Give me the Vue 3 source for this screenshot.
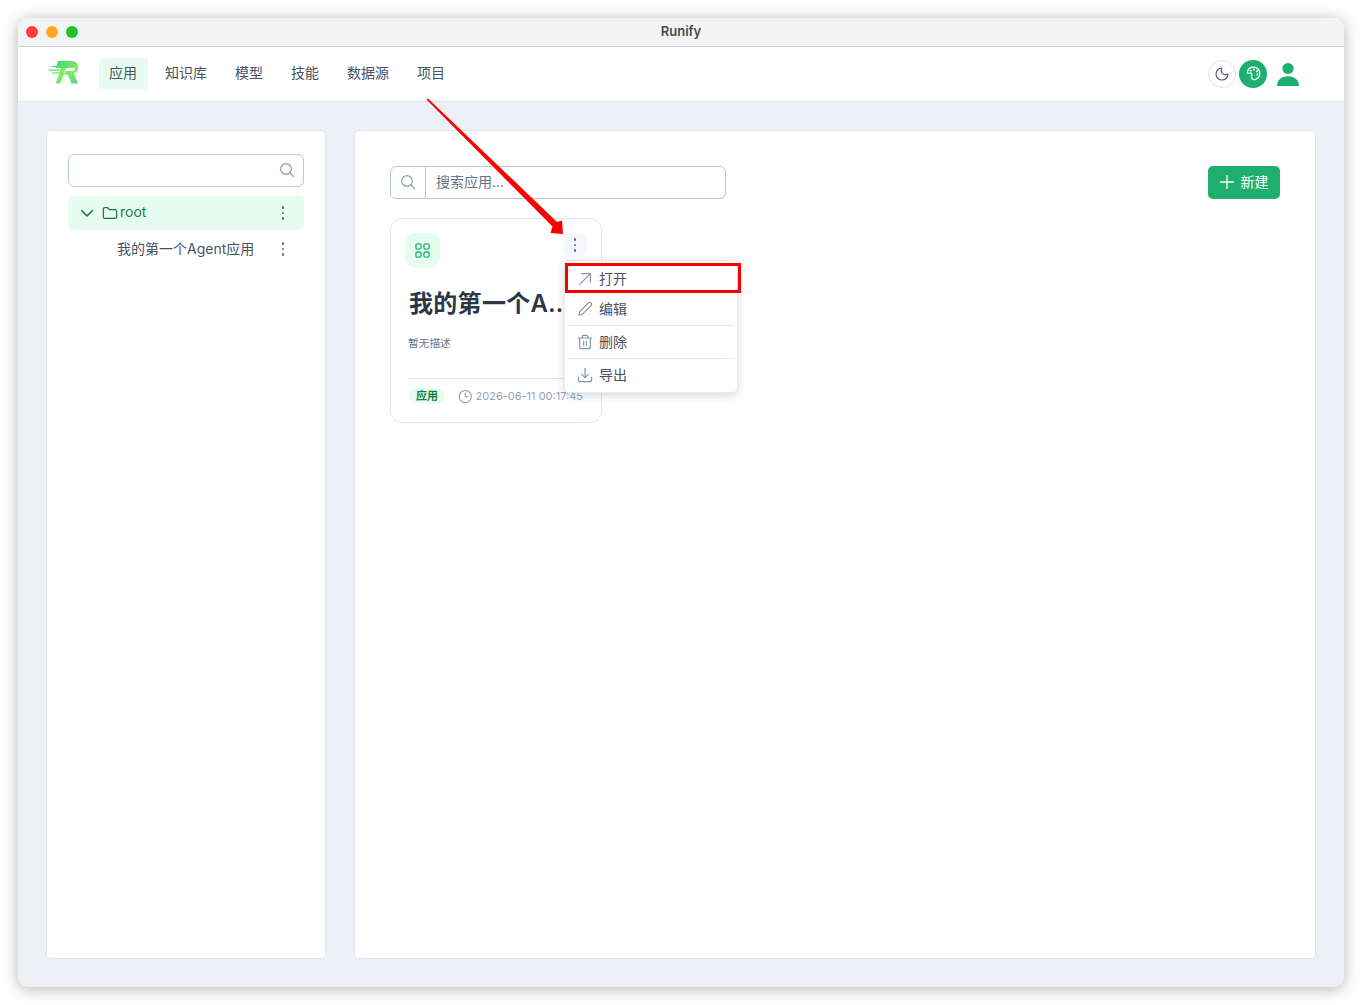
<script setup>
import { ref } from 'vue'

const navItems = ref(['应用', '知识库', '模型', '技能', '数据源', '项目'])
</script>

<template>
  <div class="page">
    <div class="window">
      <div class="titlebar">
        <div class="lights">
          <span class="light red"></span>
          <span class="light yellow"></span>
          <span class="light green"></span>
        </div>
        <span class="win-title">Runify</span>
      </div>

      <header class="nav">
        <svg class="logo" width="32" height="26" viewBox="0 0 32 26">
          <defs>
            <linearGradient id="logoGrad" x1="0" y1="0" x2="1" y2="1">
              <stop offset="0" stop-color="#2ed47e" />
              <stop offset="0.6" stop-color="#86ea62" />
              <stop offset="1" stop-color="#3fd98a" />
            </linearGradient>
          </defs>
          <path fill="url(#logoGrad)" d="M10 1h13c5.500 0 8 3.500 7 7.500-.6 2.500-2.300 4.200-4.300 5L30 23.500h-6.500l-4-9h-4l3-3.500h6c1.500 0 2.300-.7 2.500-1.500.2-1-.4-1.600-1.800-1.600H8z" />
          <path fill="url(#logoGrad)" d="M13.500 7.500h5L12 23.500H7.500l3.800-10H3.500l1.500-1.300h6.800l.5-1.500H0L2 9.500h10.500zM4 6h9l-1 1H3z" />
        </svg>
        <nav class="nav-items">
          <a v-for="(item, index) in navItems" :key="index" class="nav-item" :class="{ active: index === 0 }">{{ item }}</a>
        </nav>
        <div class="nav-right">
          <button class="round-btn moon">
            <svg width="16" height="16" viewBox="0 0 24 24" fill="none" stroke="#54627b" stroke-width="1.800" stroke-linecap="round" stroke-linejoin="round">
              <path d="M12 3a6.500 6.500 0 0 0 9 9 9 9 0 1 1-9-9z" />
            </svg>
          </button>
          <button class="round-btn palette">
            <svg width="17" height="17" viewBox="0 0 24 24" fill="none" stroke="#fff" stroke-width="1.800" stroke-linecap="round" stroke-linejoin="round">
              <path d="M12 3a9 9 0 0 0-8.800 7c-.4 1.600 1.400 2.400 2.600 1.600 1.700-1 3.700 0 3.800 2 .1 2-.8 3-.3 4.600.6 2 3 3 5.200 2.300A9.500 9.500 0 0 0 21 12c0-5-4-9-9-9z" />
              <circle cx="8" cy="8" r=".6" /><circle cx="12.500" cy="6.500" r=".6" /><circle cx="17" cy="9" r=".6" /><circle cx="17.500" cy="13.500" r=".6" />
            </svg>
          </button>
          <svg class="user" width="22" height="24" viewBox="0 0 22 24" fill="#1eae6e">
            <circle cx="11" cy="6.500" r="5.600" />
            <path d="M0 24c0-.6 0-1 .1-1.500C.8 17.200 5 14.200 11 14.200s10.200 3 10.900 8.300c.1.500.1.900.1 1.500z" />
          </svg>
        </div>
      </header>

      <main class="content">
        <aside class="panel side">
          <div class="side-search">
            <svg width="16" height="16" viewBox="0 0 24 24" fill="none" stroke="#8a97ad" stroke-width="1.700" stroke-linecap="round">
              <circle cx="10.500" cy="10.500" r="8" /><path d="M16.500 16.500 22 22" />
            </svg>
          </div>
          <div class="tree-row root-row">
            <svg class="chev" width="14" height="14" viewBox="0 0 24 24" fill="none" stroke="#14734a" stroke-width="2.600" stroke-linecap="round" stroke-linejoin="round">
              <path d="M3 8l9 9 9-9" />
            </svg>
            <svg class="folder" width="16" height="16" viewBox="0 0 24 24" fill="none" stroke="#14734a" stroke-width="1.800" stroke-linejoin="round">
              <path d="M2 6.500A2.500 2.500 0 0 1 4.500 4h4l2.500 3h8.500A2.500 2.500 0 0 1 22 9.500v8a2.500 2.500 0 0 1-2.500 2.500h-15A2.500 2.500 0 0 1 2 17.500z" />
            </svg>
            <span class="root-label">root</span>
            <span class="kebab"><i></i><i></i><i></i></span>
          </div>
          <div class="tree-row child-row">
            <span class="child-label">我的第一个Agent应用</span>
            <span class="kebab child-kebab"><i></i><i></i><i></i></span>
          </div>
        </aside>

        <section class="panel main">
          <div class="toolbar">
            <div class="search">
              <span class="search-icon">
                <svg width="16" height="16" viewBox="0 0 24 24" fill="none" stroke="#8a97ad" stroke-width="1.700" stroke-linecap="round">
                  <circle cx="10.500" cy="10.500" r="8" /><path d="M16.500 16.500 22 22" />
                </svg>
              </span>
              <span class="search-text">搜索应用...</span>
            </div>
            <button class="new-btn">
              <svg width="14" height="14" viewBox="0 0 14 14" stroke="#fff" stroke-width="1.300"><path d="M7 0v14M0 7h14" /></svg>
              <span>新建</span>
            </button>
          </div>

          <div class="card">
            <div class="card-head">
              <span class="app-icon">
                <svg width="17" height="17" viewBox="0 0 18 18" fill="none" stroke="#22b573" stroke-width="1.500">
                  <rect x="2" y="2" width="5.500" height="5.500" rx="1.800" />
                  <rect x="10.500" y="2" width="5.500" height="5.500" rx="1.800" />
                  <rect x="2" y="10.500" width="5.500" height="5.500" rx="1.800" />
                  <rect x="10.500" y="10.500" width="5.500" height="5.500" rx="1.800" />
                </svg>
              </span>
              <span class="kebab card-kebab"><i></i><i></i><i></i></span>
            </div>
            <h3 class="card-title">我的第一个Agent应用</h3>
            <p class="card-desc">暂无描述</p>
            <div class="card-foot">
              <span class="tag">应用</span>
              <svg width="15" height="15" viewBox="0 0 24 24" fill="none" stroke="#8a97ad" stroke-width="1.800" stroke-linecap="round" stroke-linejoin="round">
                <circle cx="12" cy="12" r="10" /><path d="M12 6v6.500h4.500" />
              </svg>
              <span class="date">2026-06-11 00:17:45</span>
            </div>

            <div class="menu">
              <div class="menu-item">
                <svg width="16" height="16" viewBox="0 0 24 24" fill="none" stroke="#8492a9" stroke-width="1.700" stroke-linecap="round" stroke-linejoin="round"><path d="M4 20 20 4M7 4h13v13" /></svg>
                <span>打开</span>
              </div>
              <div class="menu-item">
                <svg width="16" height="16" viewBox="0 0 24 24" fill="none" stroke="#8492a9" stroke-width="1.700" stroke-linecap="round" stroke-linejoin="round"><path d="M3 21l1-5L17 3c1-1 3-1 4 0s1 3 0 4L8 20z" /></svg>
                <span>编辑</span>
              </div>
              <div class="menu-sep"></div>
              <div class="menu-item">
                <svg width="16" height="16" viewBox="0 0 24 24" fill="none" stroke="#8492a9" stroke-width="1.700" stroke-linecap="round" stroke-linejoin="round"><path d="M2 6h20M8 6V4a2 2 0 0 1 2-2h4a2 2 0 0 1 2 2v2M4 6v13a3 3 0 0 0 3 3h10a3 3 0 0 0 3-3V6M10 11v6M14 11v6" /></svg>
                <span>删除</span>
              </div>
              <div class="menu-sep"></div>
              <div class="menu-item">
                <svg width="16" height="16" viewBox="0 0 24 24" fill="none" stroke="#8492a9" stroke-width="1.700" stroke-linecap="round" stroke-linejoin="round"><path d="M12 2v14M7 11l5 5 5-5M2 15v4a3 3 0 0 0 3 3h14a3 3 0 0 0 3-3v-4" /></svg>
                <span>导出</span>
              </div>
            </div>
          </div>
        </section>
      </main>
    </div>

    <!-- annotations on top of the screenshot -->
    <svg class="arrow" width="150" height="145" viewBox="0 0 150 145">
      <path fill="#f80000" d="M0.500 1.500 L2 0.500 L131 124 L136 122.500 L137 136 L124.500 135 L126.500 128.500 Z" />
    </svg>
    <div class="redbox"></div>
  </div>
</template>

<style>
html,
body {
  margin: 0;
  background: #fff;
}
</style>

<style scoped>
.page {
  position: relative;
  box-sizing: border-box;
  width: 1362px;
  height: 1005px;
  padding: 18px;
  font-family: Inter, "Noto Sans CJK SC", sans-serif;
  background: #fff;
  overflow: hidden;
}

.window {
  height: 969px;
  display: flex;
  flex-direction: column;
  border-radius: 10px;
  overflow: hidden;
  background: #edf1f6;
  box-shadow: 0 2px 16px rgba(0, 0, 0, 0.3);
}

.titlebar {
  position: relative;
  flex: none;
  height: 28px;
  background: #f3f3f3;
  border-bottom: 1px solid #cfcfcf;
  display: flex;
  align-items: center;
  justify-content: center;
}

.lights {
  position: absolute;
  left: 8px;
  top: 8px;
  display: flex;
  gap: 8px;
}

.light {
  width: 12px;
  height: 12px;
  border-radius: 50%;
}

.light.red { background: #fe3f3e; }
.light.yellow { background: #fdab22; }
.light.green { background: #22bf33; }

.win-title {
  font-size: 13px;
  font-weight: 600;
  color: #4a4a4a;
  font-family: Inter, sans-serif;
  margin-bottom: 3px;
}

.nav {
  flex: none;
  box-sizing: border-box;
  height: 55px;
  background: #fff;
  border-bottom: 1px solid #dfe5ee;
  display: flex;
  align-items: center;
  padding: 0 45px 2px 30px;
}

.logo {
  flex: none;
  margin-right: 19px;
}

.nav-items {
  display: flex;
  gap: 8px;
}

.nav-item {
  height: 31px;
  line-height: 30px;
  padding: 0 10px;
  font-size: 14px;
  color: #475264;
}

.nav-item.active {
  background: #e6fcf1;
  padding-right: 11px;
  margin-right: -1px;
}

.nav-right {
  margin-left: auto;
  display: flex;
  align-items: center;
  gap: 3px;
  margin-top: 1px;
}

.round-btn {
  box-sizing: border-box;
  width: 28px;
  height: 28px;
  padding: 0;
  border-radius: 50%;
  display: flex;
  align-items: center;
  justify-content: center;
}

.moon {
  background: #fff;
  border: 1px solid #dfe5ee;
}

.palette {
  background: #1eae6e;
  border: none;
}

.user {
  margin-left: 7px;
}

.content {
  flex: 1;
  min-height: 0;
  display: flex;
  gap: 28px;
  padding: 28px;
}

.panel {
  box-sizing: border-box;
  background: #fff;
  border: 1px solid #dfe5ee;
  border-radius: 5px;
}

.side {
  width: 280px;
  flex: none;
  padding: 23px 21px;
}

.side-search {
  box-sizing: border-box;
  height: 33px;
  border: 1px solid #bcc7d6;
  border-radius: 6px;
  display: flex;
  align-items: center;
  justify-content: flex-end;
  padding: 0 8px 2px 0;
  margin-bottom: 9px;
}

.tree-row {
  display: flex;
  align-items: center;
  height: 34px;
  border-radius: 5px;
  font-size: 14px;
  padding-right: 20px;
}

.root-row {
  background: #e6fcf1;
  color: #1c7f53;
  padding-left: 12px;
  margin-bottom: 1px;
}

.chev {
  margin-right: 8px;
}

.folder {
  margin-right: 2px;
}

.child-row {
  padding-left: 49px;
  color: #475264;
}

.root-label {
  flex: 1;
  padding-bottom: 4px;
}

.child-label {
  flex: 1;
}

.kebab {
  display: flex;
  flex-direction: column;
  align-items: center;
  gap: 3px;
}

.kebab i {
  width: 2.500px;
  height: 2.500px;
  border-radius: 50%;
  background: #5c6a80;
  display: block;
}

.child-kebab {
  margin-top: 2px;
}

.main {
  flex: 1;
  min-width: 0;
  padding: 35px;
}

.toolbar {
  display: flex;
  justify-content: space-between;
  margin-bottom: 19px;
}

.search {
  box-sizing: border-box;
  width: 336px;
  height: 33px;
  border: 1px solid #bcc7d6;
  border-radius: 6px;
  display: flex;
  align-items: center;
}

.search-icon {
  box-sizing: border-box;
  width: 35px;
  height: 100%;
  border-right: 1px solid #bcc7d6;
  padding-bottom: 2px;
  display: flex;
  align-items: center;
  justify-content: center;
}

.search-text {
  font-size: 14px;
  color: #64748b;
  padding: 0 0 4px 10px;
}

.new-btn {
  width: 72px;
  height: 33px;
  border: none;
  border-radius: 5px;
  background: #1eae6e;
  color: #fff;
  font-family: inherit;
  font-size: 14px;
  display: flex;
  align-items: center;
  justify-content: center;
  gap: 7px;
  padding: 0 0 3px;
}

.new-btn svg {
  margin-top: 2px;
}

.card {
  position: relative;
  box-sizing: border-box;
  width: 212px;
  height: 205px;
  border: 1px solid #dfe5ee;
  border-radius: 12px;
  padding: 14px 18px 0;
}

.card-head {
  display: flex;
  justify-content: space-between;
  margin: 0 -4px;
}

.app-icon {
  box-sizing: border-box;
  width: 35px;
  height: 35px;
  padding-bottom: 1px;
  border-radius: 10px;
  background: #e6fcf1;
  display: flex;
  align-items: center;
  justify-content: center;
}

.card-kebab {
  width: 24px;
  height: 24px;
  border-radius: 7px;
  background: #f5f7fb;
  justify-content: center;
}

.card-title {
  margin: 19px 0 0;
  font-size: 24px;
  line-height: 34px;
  font-weight: 600;
  letter-spacing: 0.3px;
  color: #2b3648;
  white-space: nowrap;
  overflow: hidden;
  text-overflow: ellipsis;
}

.card-desc {
  margin: 15px 0 0 -1px;
  font-size: 10.700px;
  line-height: 16px;
  color: #64748b;
}

.card-foot {
  margin-top: 26px;
  border-top: 1px solid #dfe5ee;
  padding-top: 9px;
  display: flex;
  align-items: center;
  white-space: nowrap;
}

.tag {
  width: 36px;
  height: 16px;
  line-height: 16px;
  text-align: center;
  flex: none;
  border-radius: 8px;
  background: #e6fcf1;
  color: #15803d;
  font-size: 11px;
  font-weight: 600;
  margin-right: 13px;
}

.date {
  font-size: 11px;
  color: #94a3b8;
  margin-left: 3px;
}

.menu {
  position: absolute;
  left: 173px;
  top: 41px;
  box-sizing: border-box;
  width: 174px;
  height: 133px;
  padding: 3px;
  background: #fff;
  border: 1px solid #e6eaf1;
  border-radius: 5px;
  box-shadow: 0 3px 8px rgba(30, 41, 59, 0.16);
}

.menu-item {
  height: 30px;
  display: flex;
  align-items: center;
  gap: 6px;
  padding-left: 9px;
  font-size: 14px;
  color: #475264;
}

.menu-item span {
  padding-bottom: 2px;
}

.menu-sep {
  height: 1px;
  background: #dfe5ee;
  margin: 1px 0;
}

.arrow {
  position: absolute;
  left: 426px;
  top: 98px;
}

.redbox {
  position: absolute;
  left: 565px;
  top: 263px;
  box-sizing: border-box;
  width: 176px;
  height: 30px;
  border: 3px solid #f80000;
}
</style>
